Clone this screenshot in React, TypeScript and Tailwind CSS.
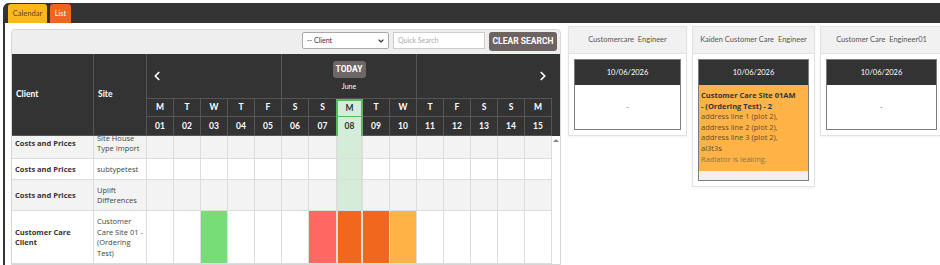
import { ChevronDown, ChevronLeft, ChevronRight } from 'lucide-react';

const DAYS = [
  { l: 'M', d: '01' },
  { l: 'T', d: '02' },
  { l: 'W', d: '03' },
  { l: 'T', d: '04' },
  { l: 'F', d: '05' },
  { l: 'S', d: '06' },
  { l: 'S', d: '07' },
  { l: 'M', d: '08' },
  { l: 'T', d: '09' },
  { l: 'W', d: '10' },
  { l: 'T', d: '11' },
  { l: 'F', d: '12' },
  { l: 'S', d: '13' },
  { l: 'S', d: '14' },
  { l: 'M', d: '15' },
];
const TODAY = 7;

type Row = {
  client: string;
  site: string;
  h: string;
  alt: boolean;
  cells?: Record<number, string>;
};

const ROWS: Row[] = [
  { client: 'Costs and Prices', site: 'Site House Type Import', h: 'h-[31px]', alt: true },
  { client: 'Costs and Prices', site: 'subtypetest', h: 'h-[21px]', alt: false },
  { client: 'Costs and Prices', site: 'Uplift Differences', h: 'h-[31px]', alt: true },
  {
    client: 'Customer Care Client',
    site: 'Customer Care Site 01 - (Ordering Test)',
    h: 'h-[53px]',
    alt: false,
    cells: {
      2: 'bg-[#77dd77]',
      6: 'bg-[#ff6961]',
      7: 'bg-[#f0671d]',
      8: 'bg-[#f0671d]',
      9: 'bg-[#ffb347]',
    },
  },
];

function dayBorder(i: number) {
  if (i === TODAY) return 'border-x-2 border-[#5cb85c]';
  if (i === TODAY - 1) return '';
  return 'border-r';
}

function CalendarHeader() {
  return (
    <div className="flex bg-[#333]">
      <div className="grid grid-cols-[82px_53px_repeat(15,27px)] grid-rows-[45px_18px_19px] font-['Lato',sans-serif] text-[8.5px] font-bold text-white">
        <div className="row-span-3 flex items-center border-r border-b border-[#555] pl-[4px]">Client</div>
        <div className="row-span-3 flex items-center border-r border-b border-[#555] pl-[4px]">Site</div>
        <div className="col-span-5 flex items-center border-r border-b border-[#555] pl-[3px]">
          <ChevronLeft size={14} strokeWidth={3} />
        </div>
        <div className="col-span-5 flex flex-col items-center border-r border-b border-[#555] pt-[7px]">
          <div className="flex h-[17px] w-[33px] items-center justify-center rounded-[3px] bg-[#6d6666] font-['Roboto',sans-serif] text-[8.5px] font-bold">
            TODAY
          </div>
          <div className="mt-[3px] text-[7px] font-normal">June</div>
        </div>
        <div className="col-span-5 flex items-center justify-end border-b border-[#555] pr-[2px]">
          <ChevronRight size={14} strokeWidth={3} />
        </div>
        {DAYS.map((d, i) => (
          <div
            key={'l' + i}
            className={
              i === TODAY
                ? 'flex items-center justify-center border-x-2 border-t-2 border-b border-[#5cb85c] bg-[#d4edda] text-[#333]'
                : `flex items-center justify-center border-b border-[#555] ${i === TODAY - 1 ? '' : 'border-r'}`
            }
          >
            {d.l}
          </div>
        ))}
        {DAYS.map((d, i) => (
          <div
            key={'d' + i}
            className={
              i === TODAY
                ? 'flex items-center justify-center border-x-2 border-[#5cb85c] bg-[#d4edda] text-[#333]'
                : `flex items-center justify-center border-b border-[#555] ${i === TODAY - 1 ? '' : 'border-r'}`
            }
          >
            {d.d}
          </div>
        ))}
      </div>
      <div className="w-[8px]" />
    </div>
  );
}

function CalendarBody() {
  return (
    <div className="flex h-[128px] overflow-hidden bg-white">
      <div className="-mt-[8px] flex flex-col">
        {ROWS.map((r, ri) => (
          <div
            key={ri}
            className={`grid grid-cols-[82px_53px_repeat(15,27px)] ${r.h} ${r.alt ? 'bg-[#f3f3f3]' : 'bg-white'} text-[7.5px] leading-[10.5px] text-[#333]`}
          >
            <div className="flex items-center border-r border-b border-[#ddd] pl-[3px] pr-[8px] font-bold">
              {r.client}
            </div>
            <div className="flex items-center border-r border-b border-[#ddd] pl-[3px] pr-[2px] text-[#444]">
              {r.site}
            </div>
            {DAYS.map((_, i) => {
              const fill = r.cells?.[i];
              const bg = fill ?? (i === TODAY ? 'bg-[#d5ecd9]' : '');
              return (
                <div
                  key={i}
                  className={`border-b border-[#ddd] ${dayBorder(i)} ${i === TODAY ? '' : 'border-r-[#ddd]'} ${bg}`}
                />
              );
            })}
          </div>
        ))}
      </div>
      <div className="flex w-[8px] justify-center pt-[3px]">
        <div className="h-0 w-0 border-x-[3px] border-b-[3px] border-x-transparent border-b-[#888]" />
      </div>
    </div>
  );
}

function DayBox({ children }: { children: React.ReactNode }) {
  return (
    <div className="border border-[#7d7d7d] bg-white">
      <div className="flex h-[25px] items-center justify-center bg-[#333] font-['Lato',sans-serif] text-[7.5px] text-white">
        10/06/2026
      </div>
      {children}
    </div>
  );
}

function EngineerCard({ name, width, children }: { name: string; width: string; children: React.ReactNode }) {
  return (
    <div className={`${width} shrink-0 border border-[#e2e2e2] bg-white shadow-[0_1px_2px_rgba(0,0,0,0.06)]`}>
      <div className="flex h-[27px] items-center justify-center border-b border-[#e2e2e2] bg-[#f1f1f1] font-['Lato',sans-serif] text-[7.5px] whitespace-pre text-[#555]">
        {name}
      </div>
      <div className="px-[5px] pt-[5px] pb-[5px]">{children}</div>
    </div>
  );
}

function EmptyDay() {
  return (
    <DayBox>
      <div className="flex h-[44px] items-center justify-center font-['Open_Sans',sans-serif] text-[7px] text-[#555]">
        -
      </div>
    </DayBox>
  );
}

export default function App() {
  return (
    <div className="h-[265px] w-[940px] overflow-hidden bg-white pt-[3px] pl-[3px] font-['Open_Sans',sans-serif]">
      <div className="flex h-full flex-col rounded-tl-[6px] border-l-2 border-[#333]">
        {/* Tabs */}
        <div className="flex h-[21px] items-end gap-[3px] rounded-tl-[4px] bg-[#333] pl-[3px] font-['Lato',sans-serif] text-[7.5px]">
          <div className="flex h-[19px] w-[39px] items-center justify-center rounded-t-[3px] bg-[#fbb917] text-[#5a4a1c]">
            Calendar
          </div>
          <div className="flex h-[19px] w-[21px] items-center justify-center rounded-t-[3px] bg-[#f0641e] text-white">
            List
          </div>
        </div>

        <div className="flex items-start">
          {/* Calendar panel */}
          <div className="mt-[6px] ml-[6px] w-[550px] shrink-0 rounded-t-[4px] border border-[#d6d6d6] bg-[#eee]">
            <div className="flex h-[24px] items-start justify-end gap-[4px] pt-[2px] pr-[3px]">
              <div className="flex h-[17px] w-[87px] items-center justify-between rounded-[2px] border border-[#a9a9a9] bg-white pr-[3px] pl-[4px] font-['Lato',sans-serif] text-[7px] text-[#333]">
                <span>-- Client</span>
                <ChevronDown size={8} strokeWidth={3.5} className="text-[#333]" />
              </div>
              <div className="flex h-[17px] w-[92px] items-center border border-[#ccc] bg-white pl-[4px] font-['Lato',sans-serif] text-[7px] text-[#aaa]">
                Quick Search
              </div>
              <div className="flex h-[19px] w-[68px] items-center justify-center rounded-[3px] bg-[#6d6363] font-['Roboto',sans-serif] text-[8.5px] font-bold text-white">
                CLEAR SEARCH
              </div>
            </div>
            <CalendarHeader />
            <CalendarBody />
          </div>

          {/* Engineer columns */}
          <div className="mt-[3px] ml-[7px] flex items-start gap-[5px]">
            <EngineerCard name="Customercare  Engineer" width="w-[119px]">
              <EmptyDay />
            </EngineerCard>
            <EngineerCard name="Kaiden Customer Care  Engineer" width="w-[123px]">
              <DayBox>
                <div className="bg-[#ffb347] pt-[5px] pr-[2px] pb-[6px] pl-[2px] text-[7.5px] leading-[10.5px]">
                  <div className="font-bold text-[#333]">
                    <div className="whitespace-nowrap">Customer Care Site 01AM</div>
                    <div className="whitespace-nowrap">- (Ordering Test) - 2</div>
                  </div>
                  <div className="text-[#5e4b2b]">
                    <div className="whitespace-nowrap">address line 1 (plot 2),</div>
                    <div className="whitespace-nowrap">address line 2 (plot 2),</div>
                    <div className="whitespace-nowrap">address line 3 (plot 2),</div>
                    <div>al3t3s</div>
                  </div>
                  <div className="mt-[1px] text-[#8e7245]">Radiator is leaking.</div>
                </div>
                <div className="h-[9px] bg-[#f0f0f0]" />
              </DayBox>
            </EngineerCard>
            <EngineerCard name="Customer Care  Engineer01" width="w-[123px]">
              <EmptyDay />
            </EngineerCard>
          </div>
        </div>
      </div>
    </div>
  );
}
